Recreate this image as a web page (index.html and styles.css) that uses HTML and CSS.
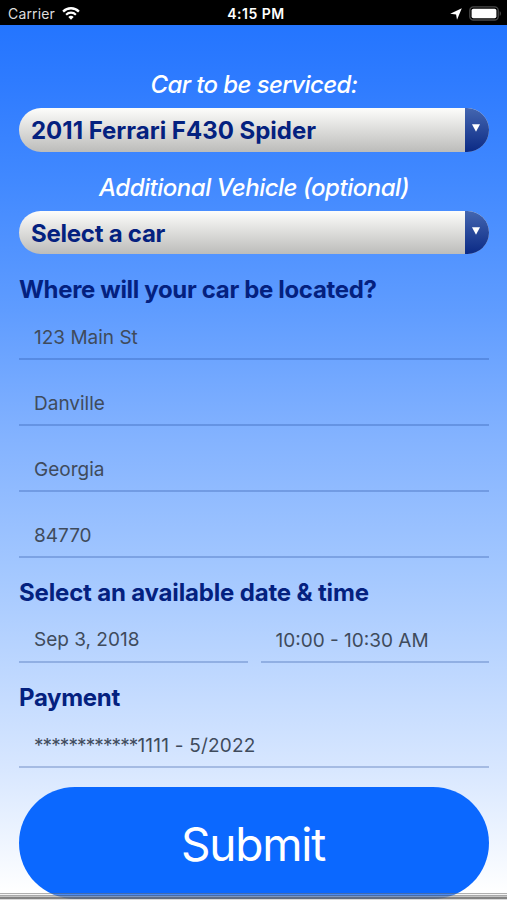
FILE: index.html
```
<!DOCTYPE html>
<html lang="en">
<head>
  <meta charset="UTF-8">
  <meta name="viewport" content="width=device-width, initial-scale=1.0">
  <title>Schedule service</title>
  <link rel="stylesheet" href="styles.css">
</head>
<body>
  <div class="status-bar">
    <div class="status-left">
      <span class="carrier">Carrier</span>
      <svg class="wifi" width="18" height="13" viewBox="0 0 18 13">
        <path d="M1.1 4.6a11 11 0 0 1 15.8 0" fill="none" stroke="#fff" stroke-width="2.3"/>
        <path d="M4.1 7.7a6.9 6.9 0 0 1 9.8 0" fill="none" stroke="#fff" stroke-width="2.1"/>
        <path d="M9 12.8 6.3 10a3.8 3.8 0 0 1 5.4 0z" fill="#fff"/>
      </svg>
    </div>
    <div class="status-time">4:15 PM</div>
    <div class="status-right">
      <svg width="12" height="12" viewBox="0 0 12 12">
        <path d="M11.8.3 7 11.8 6.1 6.4.2 5.8z" fill="#fff"/>
      </svg>
      <svg width="33" height="15" viewBox="0 0 33 15">
        <rect x=".8" y=".8" width="28.4" height="13.2" rx="3.6" fill="none" stroke="#4a4a4a" stroke-width="1.3"/>
        <rect x="2.6" y="2.7" width="24.8" height="9.5" rx="1.8" fill="#fff"/>
        <path d="M30.7 5.2c1.6.6 1.6 4 0 4.6z" fill="#4a4a4a"/>
      </svg>
    </div>
  </div>

  <form class="service-form">
    <div class="label label-car">Car to be serviced:</div>
    <div class="select">
      <span class="select-value value-car">2011 Ferrari F430 Spider</span>
      <span class="select-arrow"><svg width="8" height="8" viewBox="0 0 8 8"><path d="M0 .2h8L4 7.8z" fill="#fff"/></svg></span>
    </div>

    <div class="label label-extra">Additional Vehicle (optional)</div>
    <div class="select">
      <span class="select-value">Select a car</span>
      <span class="select-arrow"><svg width="8" height="8" viewBox="0 0 8 8"><path d="M0 .2h8L4 7.8z" fill="#fff"/></svg></span>
    </div>

    <h2 class="first-heading">Where will your car be located?</h2>
    <div class="fields">
      <div class="field"><span>123 Main St</span></div>
      <div class="field"><span>Danville</span></div>
      <div class="field"><span>Georgia</span></div>
      <div class="field"><span>84770</span></div>
    </div>

    <h2 class="date-heading">Select an available date &amp; time</h2>
    <div class="field-row">
      <div class="field field-date"><span>Sep 3, 2018</span></div>
      <div class="field"><span>10:00 - 10:30 AM</span></div>
    </div>

    <h2>Payment</h2>
    <div class="field"><span class="mask">************</span><span class="card">1111 - 5/2022</span></div>

    <button class="submit" type="button">Submit</button>
  </form>

  <div class="bottom-bar"></div>
</body>
</html>
```
FILE: styles.css
```
* {
  box-sizing: border-box;
}

body {
  margin: 0;
  height: 900px;
  overflow: hidden;
  position: relative;
  font-family: Inter, "Liberation Sans", sans-serif;
  background: linear-gradient(to bottom, #2475ff 25px, #2e7bff 80px, #4088ff 175px, #5f9cff 310px, #84b3ff 440px, #a4c8ff 575px, #d8e7ff 770px, #fff 893px);
}

.status-bar {
  display: grid;
  grid-template-columns: 1fr auto 1fr;
  align-items: center;
  height: 25px;
  padding: 2px 5px 0 8px;
  background: #000;
  color: #fff;
  font-size: 14px;
}

.status-left,
.status-right {
  display: flex;
  align-items: center;
  gap: 7px;
}

.status-right {
  justify-content: flex-end;
}

.carrier {
  color: #ddd;
  letter-spacing: 0.15px;
}

.status-time {
  padding-left: 2px;
  font-weight: 600;
  letter-spacing: 0.5px;
}

.service-form {
  padding: 43px 18px 0 19px;
}

.label {
  height: 32px;
  line-height: 33px;
  text-align: center;
  font-size: 24px;
  font-weight: 500;
  font-style: italic;
  letter-spacing: -0.5px;
  color: #fff;
  white-space: nowrap;
}

.label-car {
  letter-spacing: -0.6px;
}

.select {
  display: flex;
  height: 44px;
  margin-top: 8px;
  border-radius: 22px;
  overflow: hidden;
  background: linear-gradient(#fdfdfb, #bcbcba);
}

.select + .label {
  margin-top: 19px;
}

.label-extra + .select {
  height: 43px;
}

.select-value {
  flex: 1;
  padding-left: 12px;
  line-height: 45px;
  font-size: 24px;
  font-weight: 700;
  letter-spacing: -0.25px;
  color: #04217f;
  white-space: nowrap;
}

.value-car {
  letter-spacing: 0;
}

.select-arrow {
  display: flex;
  justify-content: center;
  width: 24px;
  padding: 16px 2px 0 0;
  background: linear-gradient(#4466b0, #0b2a85);
}

h2 {
  height: 30px;
  margin: 19px 0 12px;
  line-height: 32px;
  font-size: 24px;
  font-weight: 700;
  letter-spacing: -0.33px;
  color: #04217f;
  white-space: nowrap;
}

.first-heading {
  margin-top: 20px;
}

.date-heading {
  letter-spacing: -0.17px;
}

.fields {
  display: flex;
  flex-direction: column;
  gap: 22px;
}

.field {
  display: flex;
  align-items: center;
  height: 44px;
  padding-left: 15px;
  border-bottom: 2px solid rgba(30, 70, 150, 0.27);
  font-size: 19px;
  color: #3f4b5c;
  white-space: nowrap;
}

.field-row {
  display: grid;
  grid-template-columns: 1fr 1fr;
  gap: 13px;
}

.field-date {
  padding-bottom: 2px;
}

.mask {
  letter-spacing: -0.9px;
}

.card {
  letter-spacing: 0.2px;
}

.submit {
  display: block;
  width: 100%;
  height: 112px;
  margin-top: 19px;
  padding: 2px 2px 0 0;
  border: 0;
  border-radius: 56px;
  background: #0b68ff;
  color: #fff;
  font-family: inherit;
  font-size: 46px;
  letter-spacing: -1.2px;
}

/* edge of the tab bar, laid over the button */
.bottom-bar {
  position: absolute;
  left: 0;
  right: 0;
  bottom: 0;
  height: 7px;
  background: linear-gradient(
    rgba(110, 110, 110, 0.55) 0 1px,
    rgba(220, 220, 220, 0.3) 1px 2px,
    rgba(110, 110, 110, 0.6) 2px 3px,
    rgba(170, 170, 170, 0.7) 3px 4px,
    rgba(110, 110, 110, 0.85) 4px 6px,
    rgba(190, 190, 190, 0.6) 6px 7px
  );
}
```
